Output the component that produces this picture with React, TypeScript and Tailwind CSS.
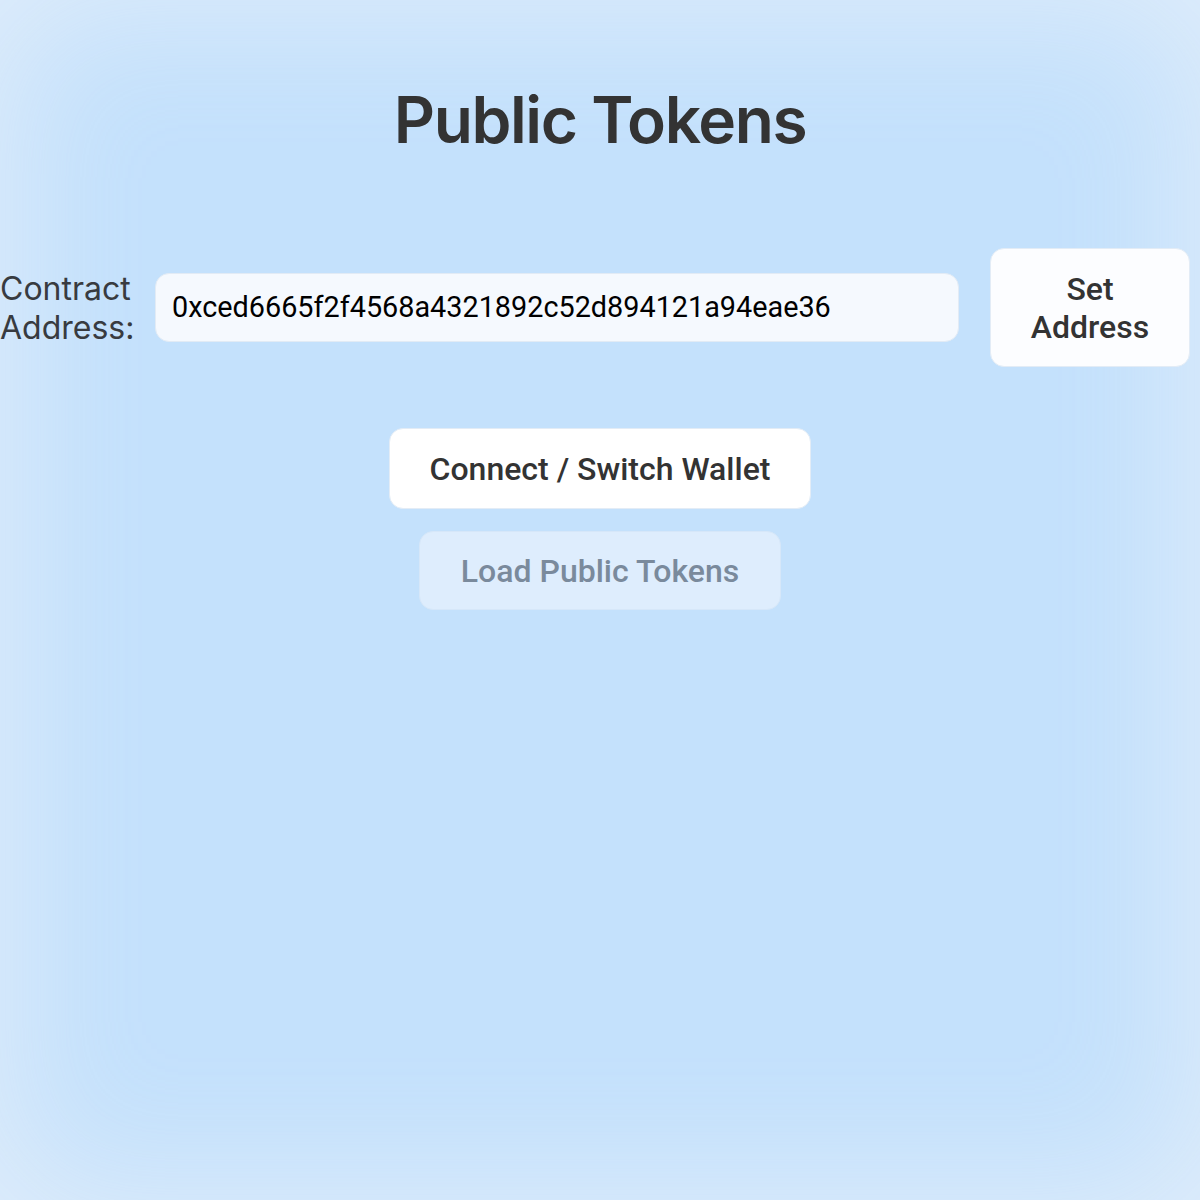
export default function App() {
  return (
    <div className="relative h-[1200px] w-[1200px] overflow-hidden bg-[#c4e1fc]">
      {/* soft light edges */}
      <div className="pointer-events-none absolute inset-0 shadow-[inset_0_0_140px_10px_rgba(232,240,250,0.75)]"></div>

      <div className="relative flex flex-col items-center">
        <h1 className="mt-[82px] font-['Inter',sans-serif] text-[64px] font-semibold leading-[76px] tracking-[-1.4px] text-[#333333]">
          Public Tokens
        </h1>

        <div className="mt-[90px] flex w-full items-center pr-[10px]">
          <label className="w-[136px] shrink-0 font-['Inter',sans-serif] text-[32px] leading-[39px] text-[#383b40]">
            Contract Address:
          </label>
          <div className="ml-[19px] flex h-[69px] w-[805px] items-center rounded-[14px] border border-[#e2ebf5] bg-[#f5f9fe] px-[16px]">
            <span className="font-['Roboto',sans-serif] text-[28.8px] text-black">
              0xced6665f2f4568a4321892c52d894121a94eae36
            </span>
          </div>
          <button className="ml-[31px] flex h-[119px] w-[200px] shrink-0 items-center justify-center rounded-[14px] border border-[#e3ecf6] bg-[#fcfdff] font-['Roboto',sans-serif] text-[32px] font-medium leading-[38px] text-[#333333]">
            Set
            <br />
            Address
          </button>
        </div>

        <button className="mt-[61px] flex h-[81px] w-[422px] items-center justify-center rounded-[14px] border border-[#e3ecf6] bg-white font-['Roboto',sans-serif] text-[32px] font-medium text-[#333333]">
          Connect / Switch Wallet
        </button>

        <button className="mt-[22px] flex h-[79px] w-[362px] items-center justify-center rounded-[14px] border border-[#d6e7f9] bg-[#deedfd] font-['Roboto',sans-serif] text-[32px] font-medium text-[#7a8a9c]">
          Load Public Tokens
        </button>
      </div>
    </div>
  );
}
